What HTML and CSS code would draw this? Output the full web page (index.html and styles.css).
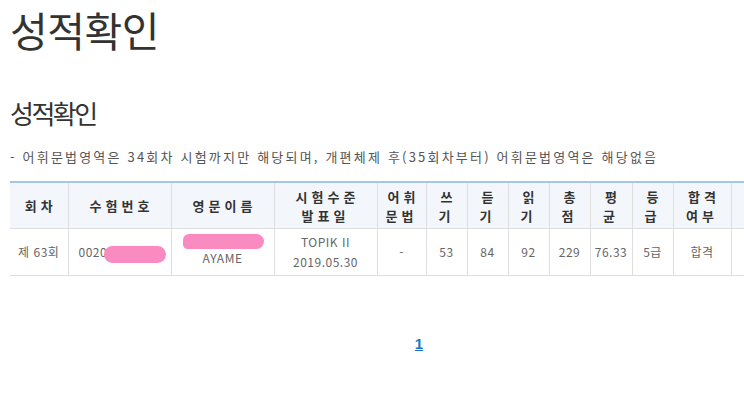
FILE: index.html
```html
<!DOCTYPE html>
<html lang="ko">
<head>
<meta charset="utf-8">
<title>성적확인</title>
<link rel="stylesheet" href="styles.css">
</head>
<body>
<div class="page">
  <h1 class="title">성적확인</h1>
  <h2 class="subtitle">성적확인</h2>
  <p class="notice">- 어휘문법영역은 34회차 시험까지만 해당되며, 개편체제 후(35회차부터) 어휘문법영역은 해당없음</p>
  <table class="score">
    <colgroup>
      <col class="c58"><col class="c103"><col class="c103"><col class="c103"><col class="c49">
      <col class="c41"><col class="c41"><col class="c41"><col class="c41"><col class="c42"><col class="c41">
      <col class="c58"><col class="c97">
    </colgroup>
    <thead>
      <tr>
        <th>회차</th>
        <th>수험번호</th>
        <th>영문이름</th>
        <th>시험수준<br>발표일</th>
        <th>어휘<br>문법</th>
        <th>쓰<br>기</th>
        <th>듣<br>기</th>
        <th>읽<br>기</th>
        <th>총<br>점</th>
        <th>평<br>균</th>
        <th>등<br>급</th>
        <th>합격<br>여부</th>
        <th></th>
      </tr>
    </thead>
    <tbody>
      <tr>
        <td>제 63회</td>
        <td class="num">0020<span class="blur blur-num"></span></td>
        <td class="name"><span class="blur blur-name"></span>AYAME</td>
        <td>TOPIK II<br>2019.05.30</td>
        <td>-</td>
        <td>53</td>
        <td>84</td>
        <td>92</td>
        <td>229</td>
        <td>76.33</td>
        <td>5급</td>
        <td>합격</td>
        <td></td>
      </tr>
    </tbody>
  </table>
  <div class="paging"><a href="#" class="current">1</a></div>
</div>
</body>
</html>
```

FILE: styles.css
```css
html, body {
  margin: 0;
  padding: 0;
  background: #fff;
  overflow: hidden;
}
body {
  font-family: "Noto Sans CJK KR", "Noto Sans", sans-serif;
  color: #333;
}
.page {
  width: 818px;
  padding: 0 10px;
}
.title {
  margin: 0;
  padding-top: 5px;
  font-size: 41px;
  line-height: 48px;
  font-weight: 400;
  color: #333;
  letter-spacing: -0.5px;
}
.subtitle {
  margin: 43px 0 0;
  font-size: 26px;
  line-height: 34px;
  font-weight: 400;
  color: #333;
  letter-spacing: -2.5px;
}
.notice {
  margin: 17px 0 0;
  font-size: 13px;
  line-height: 20px;
  color: #555;
  letter-spacing: 2.2px;
}
.score {
  margin-top: 14px;
  width: 818px;
  border-collapse: collapse;
  table-layout: fixed;
  border-top: 2px solid #a4c6e7;
}
.c58 { width: 58px; }
.c103 { width: 103px; }
.c49 { width: 49px; }
.c41 { width: 41px; }
.c42 { width: 42px; }
.c97 { width: 97px; }
.score th, .score td {
  border-left: 1px solid #dedede;
  border-bottom: 1px solid #dedede;
  text-align: center;
  padding: 0;
}
.score th:first-child, .score td:first-child {
  border-left: none;
}
.score th {
  background: #f3f7fb;
  height: 45px;
  font-size: 13px;
  line-height: 19px;
  font-weight: 700;
  color: #333;
  letter-spacing: 4px;
  text-indent: 4px;
}
.score td {
  height: 46px;
  font-size: 12px;
  line-height: 20px;
  color: #666;
  letter-spacing: 0.5px;
}
.score td.num {
  text-align: left;
  padding-left: 10px;
}
.score td.name {
  line-height: 18px;
  padding-bottom: 3px;
  height: 43px;
}
.blur {
  display: inline-block;
  background: #f98bc1;
  border-radius: 10px;
  vertical-align: middle;
}
.blur-num {
  width: 62px;
  height: 17px;
  margin-left: -3px;
  position: relative;
  top: 1px;
}
.blur-name {
  display: block;
  width: 81px;
  height: 15px;
  margin: 0 auto 0 11px;
  border-radius: 8px 10px 10px 6px;
}
.paging {
  margin-top: 54px;
  text-align: center;
}
.paging .current {
  font-size: 15px;
  font-weight: 700;
  color: #1a78c2;
  text-decoration: underline;
  font-family: "Liberation Sans", sans-serif;
}
```
